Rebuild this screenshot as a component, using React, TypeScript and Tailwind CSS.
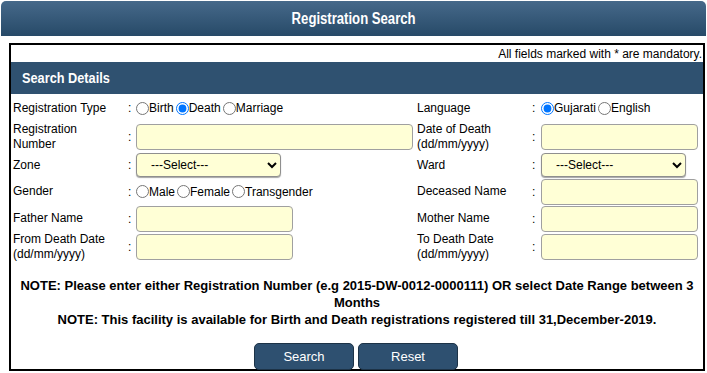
import React from 'react';

function Radio({ name, label, checked }: { name: string; label: string; checked?: boolean }) {
  return (
    <label className="flex items-center">
      <input type="radio" name={name} defaultChecked={checked} className="m-0 h-[13px] w-[13px]" />
      <span>{label}</span>
    </label>
  );
}

function TextInput({ wide }: { wide?: boolean }) {
  return (
    <input
      type="text"
      className={`h-[26px] rounded-[4px] border border-[#a0a0a0] bg-[#ffffd6] px-1 ${wide ? 'w-[277px]' : 'w-[157px]'}`}
    />
  );
}

function Select() {
  return (
    <select className="h-[24px] w-[145px] rounded-[4px] border border-[#8f8f8f] bg-[#ffffd6] pl-[10px] text-[12px] shadow-[0_1px_1px_rgba(0,0,0,0.35)]">
      <option>---Select---</option>
    </select>
  );
}

function Label({ children }: { children: React.ReactNode }) {
  return <div className="pl-[2px] leading-[15px]">{children}</div>;
}

const Colon = () => <div className="pl-[3px]">:</div>;

export default function App() {
  return (
    <div className="h-[373px] w-[707px] overflow-hidden bg-white text-[12px] text-black font-['Liberation_Sans',Arial,sans-serif]">
      <div className="mx-px mt-px flex h-[35px] items-center justify-center rounded-t-[5px] bg-gradient-to-b from-[#46698a] to-[#274a68] text-[16px] font-bold text-white">
        <span className="inline-block scale-x-[0.82]">Registration Search</span>
      </div>

      <div className="ml-[9px] mr-[2px] mt-[7px] h-[328px] border-2 border-black">
        <div className="flex h-[17px] items-center justify-end pr-px">All fields marked with * are mandatory.</div>
        <div className="flex h-[32px] items-center bg-[#2f5170] pl-[11px] text-[15px] font-bold text-white">
          <span className="inline-block origin-left scale-x-[0.85]">Search Details</span>
        </div>

        <div className="grid grid-cols-[114px_11px_279px_114px_12px_1fr] items-center">
          {/* row 1 */}
          <div className="col-span-6 grid h-[28px] grid-cols-subgrid items-center">
            <Label>Registration Type</Label>
            <Colon />
            <div className="flex items-center gap-[2px]">
              <Radio name="rt" label="Birth" />
              <Radio name="rt" label="Death" checked />
              <Radio name="rt" label="Marriage" />
            </div>
            <Label>Language</Label>
            <Colon />
            <div className="flex items-center gap-[2px]">
              <Radio name="lang" label="Gujarati" checked />
              <Radio name="lang" label="English" />
            </div>
          </div>

          {/* row 2 */}
          <div className="col-span-6 grid h-[30px] grid-cols-subgrid items-center">
            <Label>
              Registration
              <br />
              Number
            </Label>
            <Colon />
            <TextInput wide />
            <Label>
              Date of Death
              <br />
              (dd/mm/yyyy)
            </Label>
            <Colon />
            <TextInput />
          </div>

          {/* row 3 */}
          <div className="col-span-6 grid h-[26px] grid-cols-subgrid items-center">
            <Label>Zone</Label>
            <Colon />
            <Select />
            <Label>Ward</Label>
            <Colon />
            <Select />
          </div>

          {/* row 4 */}
          <div className="col-span-6 grid h-[27px] grid-cols-subgrid items-center">
            <Label>Gender</Label>
            <Colon />
            <div className="flex items-center gap-[2px]">
              <Radio name="g" label="Male" />
              <Radio name="g" label="Female" />
              <Radio name="g" label="Transgender" />
            </div>
            <Label>Deceased Name</Label>
            <Colon />
            <TextInput />
          </div>

          {/* row 5 */}
          <div className="col-span-6 grid h-[27px] grid-cols-subgrid items-center">
            <Label>Father Name</Label>
            <Colon />
            <TextInput />
            <Label>Mother Name</Label>
            <Colon />
            <TextInput />
          </div>

          {/* row 6 */}
          <div className="col-span-6 grid h-[29px] grid-cols-subgrid items-center">
            <Label>
              From Death Date
              <br />
              (dd/mm/yyyy)
            </Label>
            <Colon />
            <TextInput />
            <Label>
              To Death Date
              <br />
              (dd/mm/yyyy)
            </Label>
            <Colon />
            <TextInput />
          </div>
        </div>

        <div className="mt-[16px] text-center text-[13px] font-bold leading-[17px]">
          <div>NOTE: Please enter either Registration Number (e.g 2015-DW-0012-0000111) OR select Date Range between 3</div>
          <div>Months</div>
          <div>NOTE: This facility is available for Birth and Death registrations registered till 31,December-2019.</div>
        </div>

        <div className="mt-[15px] flex justify-center gap-[4px] pr-[2px]">
          <button className="h-[27px] w-[100px] rounded-[5px] border border-[#1d3347] bg-[#2e5070] text-[13px] text-white">
            Search
          </button>
          <button className="h-[27px] w-[100px] rounded-[5px] border border-[#1d3347] bg-[#2e5070] text-[13px] text-white">
            Reset
          </button>
        </div>
      </div>
    </div>
  );
}
